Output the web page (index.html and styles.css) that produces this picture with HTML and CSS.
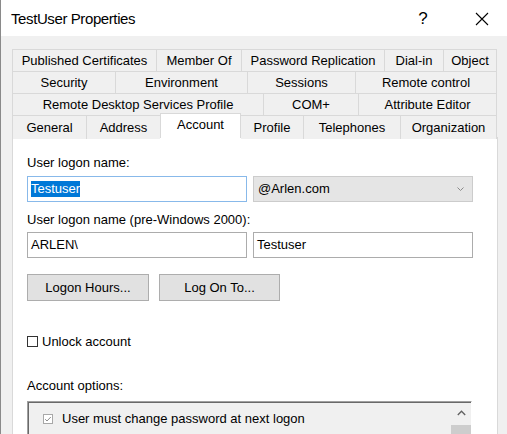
FILE: index.html
```html
<!DOCTYPE html>
<html>
<head>
<meta charset="utf-8">
<link rel="stylesheet" href="styles.css">
</head>
<body>
<div class="window">
  <div class="titlebar">
    <span class="title">TestUser Properties</span>
    <span class="help">?</span>
    <span class="close"><svg width="14" height="14" viewBox="0 0 14 14"><path d="M1 1L13 13M13 1L1 13" stroke="#000" stroke-width="1.1" fill="none"/></svg></span>
  </div>
  <div class="content">
    <div class="tabs">
      <div class="tabrow r1">
        <div class="tab">Published Certificates</div>
        <div class="tab">Member Of</div>
        <div class="tab">Password Replication</div>
        <div class="tab">Dial-in</div>
        <div class="tab last">Object</div>
      </div>
      <div class="tabrow r2">
        <div class="tab">Security</div>
        <div class="tab">Environment</div>
        <div class="tab">Sessions</div>
        <div class="tab last">Remote control</div>
      </div>
      <div class="tabrow r3">
        <div class="tab">Remote Desktop Services Profile</div>
        <div class="tab">COM+</div>
        <div class="tab last">Attribute Editor</div>
      </div>
      <div class="tabrow r4">
        <div class="tab">General</div>
        <div class="tab">Address</div>
        <div class="tab sel">Account</div>
        <div class="tab after">Profile</div>
        <div class="tab">Telephones</div>
        <div class="tab last">Organization</div>
      </div>
    </div>
    <div class="panel">
      <div class="label">User logon name:</div>
      <div class="row r-in1">
        <div class="field focus"><span class="selected">Testuser</span></div>
        <div class="field combo"><span>@Arlen.com</span><svg width="7" height="4" viewBox="0 0 7 4"><path d="M0.5 0.5L3.5 3.5L6.5 0.5" stroke="#8a8a8a" stroke-width="1" fill="none"/></svg></div>
      </div>
      <div class="label l2">User logon name (pre-Windows 2000):</div>
      <div class="row r-in2">
        <div class="field">ARLEN\</div>
        <div class="field">Testuser</div>
      </div>
      <div class="row buttons">
        <div class="btn b1">Logon Hours...</div>
        <div class="btn b2">Log On To...</div>
      </div>
      <div class="check-row">
        <span class="box"></span><span>Unlock account</span>
      </div>
      <div class="label l3">Account options:</div>
      <div class="listbox">
        <div class="items">
          <div class="opt">
            <svg class="cb" width="10" height="10" viewBox="0 0 10 10"><rect x="0.5" y="0.5" width="9" height="9" fill="#fff" stroke="#a8a8a8"/><path d="M2.2 5.2L4 7L7.8 3" stroke="#8c8c8c" stroke-width="1" fill="none"/></svg>
            <span>User must change password at next logon</span>
          </div>
        </div>
        <div class="scroll">
          <div class="arrow"><svg width="9" height="6" viewBox="0 0 9 6"><path d="M0.8 5L4.5 1.2L8.2 5" stroke="#606060" stroke-width="1.3" fill="none"/></svg></div>
          <div class="thumb"></div>
        </div>
      </div>
    </div>
  </div>
</div>
</body>
</html>
```
FILE: styles.css
```css
* { box-sizing: border-box; }
html, body { margin: 0; padding: 0; }
body {
  font-family: "Liberation Sans", Arial, sans-serif;
  font-size: 13px;
  color: #000;
  background: #f0f0f0;
}
.window {
  width: 507px;
  height: 434px;
  border-left: 1px solid #8a8a8a;
  overflow: hidden;
  background: #f0f0f0;
}
.titlebar {
  height: 36px;
  background: #fff;
  display: flex;
  align-items: center;
  padding-left: 10px;
  padding-right: 18px;
}
.title {
  flex: 1;
  font-size: 15px;
  letter-spacing: -0.4px;
  padding-top: 1px;
}
.help {
  width: 24px;
  text-align: center;
  font-size: 17px;
  margin-right: 40px;
  padding-top: 1px;
}
.close { width: 14px; height: 14px; display: flex; margin-top: 2px; }

.content { padding: 13px 0 0 11px; }
.tabs { width: 485px; }
.tabrow { display: grid; height: 22px; }
.r1 { grid-template-columns: 144px 85px 143px 59px 54px; }
.r2 { grid-template-columns: 103px 132px 108px 142px; }
.r3 { grid-template-columns: 251px 95px 139px; }
.r4 { grid-template-columns: 74px 74px 81px 62px 97px 97px; }
.tab {
  border-top: 1px solid #d9d9d9;
  border-left: 1px solid #d9d9d9;
  text-align: center;
  line-height: 21px;
  white-space: nowrap;
  background: #f0f0f0;
}
.r4 .tab { line-height: 23px; }
.tab.last { border-right: 1px solid #d9d9d9; }
.r4 .tab.sel {
  background: #fff;
  margin-top: -2px;
  height: 25px;
  border-right: 1px solid #d9d9d9;
  position: relative;
  z-index: 1;
  line-height: 22px;
}
.tab.after { border-left: 0; }

.panel {
  width: 486px;
  height: 310px;
  background: #fff;
  border: 1px solid #d9d9d9;
  padding: 17px 0 0 14px;
}
.label { line-height: 15px; height: 15px; }
.l2 { margin-top: 10px; }
.l3 { margin-top: 29px; }
.row { display: flex; gap: 6px; }
.r-in1 { margin-top: 6px; }
.r-in2 { margin-top: 5px; }
.field {
  width: 220px;
  height: 26px;
  border: 1px solid #acacac;
  padding: 0 3px;
  line-height: 24px;
  background: #fff;
}
.field.focus { border-color: #88b9ea; }
.selected {
  display: inline-block;
  background: #0078d7;
  color: #fff;
  line-height: 16px;
  vertical-align: middle;
  margin-top: -2px;
}
.field.combo {
  background: #e5e5e5;
  border-color: #cccccc;
  display: flex;
  align-items: center;
  justify-content: space-between;
  padding: 0 8px 0 4px;
}
.buttons { margin-top: 16px; gap: 10px; }
.btn {
  height: 27px;
  border: 1px solid #adadad;
  background: #e1e1e1;
  text-align: center;
  line-height: 25px;
}
.b1 { width: 122px; }
.b2 { width: 121px; }
.check-row {
  margin-top: 33px;
  display: flex;
  align-items: center;
  height: 15px;
  line-height: 15px;
}
.box {
  width: 11px;
  height: 11px;
  border: 1px solid #333;
  background: #fff;
  margin-right: 4px;
}
.listbox {
  margin-top: 8px;
  width: 445px;
  height: 60px;
  display: flex;
  background: #f0f0f0;
  border: 1px solid;
  border-color: #a0a0a0 #ffffff #ffffff #a0a0a0;
  box-shadow: inset 1px 1px 0 #696969;
}
.items { flex: 1; padding: 9px 0 0 15px; }
.opt { display: flex; align-items: center; height: 16px; line-height: 16px; }
.cb { margin-right: 9px; flex: none; }
.scroll { width: 20px; display: flex; flex-direction: column; padding-top: 2px; }
.arrow { height: 20px; display: flex; align-items: center; justify-content: center; padding-bottom: 2px; }
.thumb { margin-top: 1px; flex: 1; background: #cdcdcd; }
```
